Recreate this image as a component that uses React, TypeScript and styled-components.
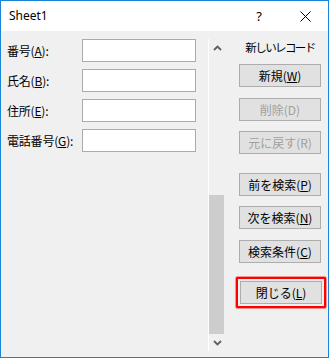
import React from "react";
import styled, { createGlobalStyle } from "styled-components";

const Global = createGlobalStyle`
  html, body { margin: 0; padding: 0; background: #ffffff; }
  body { font-family: "Noto Sans CJK JP", "Noto Sans", sans-serif; font-size: 12px; color: #000; }
  * { box-sizing: border-box; }
`;

const Window = styled.div`
  width: 329px;
  height: 358px;
  border: 1px solid #1883d7;
  display: flex;
  flex-direction: column;
  background: #f0f0f0;
`;

const TitleBar = styled.div`
  height: 30px;
  background: #ffffff;
  display: flex;
  align-items: center;
  padding-left: 8px;
  flex-shrink: 0;
`;

const Title = styled.div`
  flex: 1;
  font-family: "Segoe UI", "Noto Sans", "Liberation Sans", sans-serif;
  font-size: 12px;
  color: #000;
  line-height: 1;
`;

const TitleBtn = styled.div<{ $w: number }>`
  width: ${(p) => p.$w}px;
  height: 29px;
  display: flex;
  align-items: center;
  justify-content: center;
  font-family: "Noto Sans", "Liberation Sans", sans-serif;
  font-size: 13px;
  color: #000;
`;

const Body = styled.div`
  flex: 1;
  display: flex;
  flex-direction: row;
`;

const Form = styled.div`
  width: 207px;
  padding: 8px 0 0 6px;
  display: flex;
  flex-direction: column;
  gap: 7px;
`;

const Row = styled.div`
  display: flex;
  align-items: center;
  height: 23px;
`;

const Label = styled.div`
  width: 75px;
  font-size: 12px;
  line-height: 1;
  white-space: nowrap;
  letter-spacing: -0.2px;
`;

const Key = styled.span`
  text-decoration: underline;
  text-underline-offset: 1px;
`;

const Input = styled.div`
  width: 114px;
  height: 23px;
  background: #ffffff;
  border: 1px solid #ababab;
`;

const Scroll = styled.div`
  margin-top: 8px;
  margin-bottom: 6px;
  width: 17px;
  border-left: 1px solid #ffffff;
  display: flex;
  flex-direction: column;
`;

const Arrow = styled.div`
  height: 17px;
  display: flex;
  align-items: center;
  justify-content: center;
  flex-shrink: 0;
`;

const Track = styled.div`
  flex: 1;
  display: flex;
  flex-direction: column;
  justify-content: flex-end;
  padding: 0 1px 0 0;
`;

const Thumb = styled.div`
  height: 139px;
  background: #cdcdcd;
`;

const Side = styled.div`
  flex: 1;
  display: flex;
  flex-direction: column;
  align-items: flex-start;
  padding: 8px 0 0 14px;
`;

const Caption = styled.div`
  width: 82px;
  text-align: center;
  font-size: 11.5px;
  line-height: 16px;
  height: 16px;
  letter-spacing: -1.6px;
  white-space: nowrap;
`;

const Button = styled.div<{ $mt: number; $disabled?: boolean }>`
  margin-top: ${(p) => p.$mt}px;
  width: 82px;
  height: 23px;
  background: #e1e1e1;
  border: 1px solid #adadad;
  display: flex;
  align-items: center;
  justify-content: center;
  font-size: 12px;
  line-height: 1;
  color: ${(p) => (p.$disabled ? "#a0a0a0" : "#000")};
  white-space: nowrap;
`;

const Highlight = styled.div<{ $mt: number }>`
  margin-top: ${(p) => p.$mt}px;
  margin-left: -3px;
  padding: 2px;
  border: 2px solid #ff0000;
  border-radius: 1px;
  box-shadow: 0 0 0 0.5px #ff3030;
  display: flex;
`;

const Chevron = ({ up }: { up?: boolean }) => (
  <svg width="9" height="6" viewBox="0 0 9 6">
    <path
      d={up ? "M1 5 L4.5 1.5 L8 5" : "M1 1 L4.5 4.5 L8 1"}
      fill="none"
      stroke="#606060"
      strokeWidth="1.8"
    />
  </svg>
);

const fields: { name: string; key: string }[] = [
  { name: "番号", key: "A" },
  { name: "氏名", key: "B" },
  { name: "住所", key: "E" },
  { name: "電話番号", key: "G" },
];

export default function App() {
  return (
    <>
      <Global />
      <Window>
        <TitleBar>
          <Title>Sheet1</Title>
          <TitleBtn $w={46}>?</TitleBtn>
          <TitleBtn $w={46}>
            <svg width="11" height="11" viewBox="0 0 11 11">
              <path d="M0.5 0.5 L10.5 10.5 M10.5 0.5 L0.5 10.5" stroke="#000" strokeWidth="1" />
            </svg>
          </TitleBtn>
        </TitleBar>
        <Body>
          <Form>
            {fields.map((f) => (
              <Row key={f.key}>
                <Label>
                  {f.name}(<Key>{f.key}</Key>):
                </Label>
                <Input />
              </Row>
            ))}
          </Form>
          <Scroll>
            <Arrow>
              <Chevron up />
            </Arrow>
            <Track>
              <Thumb />
            </Track>
            <Arrow>
              <Chevron />
            </Arrow>
          </Scroll>
          <Side>
            <Caption>新しいレコード</Caption>
            <Button $mt={9}>
              新規(<Key>W</Key>)
            </Button>
            <Button $mt={11} $disabled>
              削除(D)
            </Button>
            <Button $mt={10} $disabled>
              元に戻す(R)
            </Button>
            <Button $mt={19}>
              前を検索(<Key>P</Key>)
            </Button>
            <Button $mt={10}>
              次を検索(<Key>N</Key>)
            </Button>
            <Button $mt={11}>
              検索条件(<Key>C</Key>)
            </Button>
            <Highlight $mt={14}>
              <Button $mt={0}>
                閉じる(<Key>L</Key>)
              </Button>
            </Highlight>
          </Side>
        </Body>
      </Window>
    </>
  );
}
